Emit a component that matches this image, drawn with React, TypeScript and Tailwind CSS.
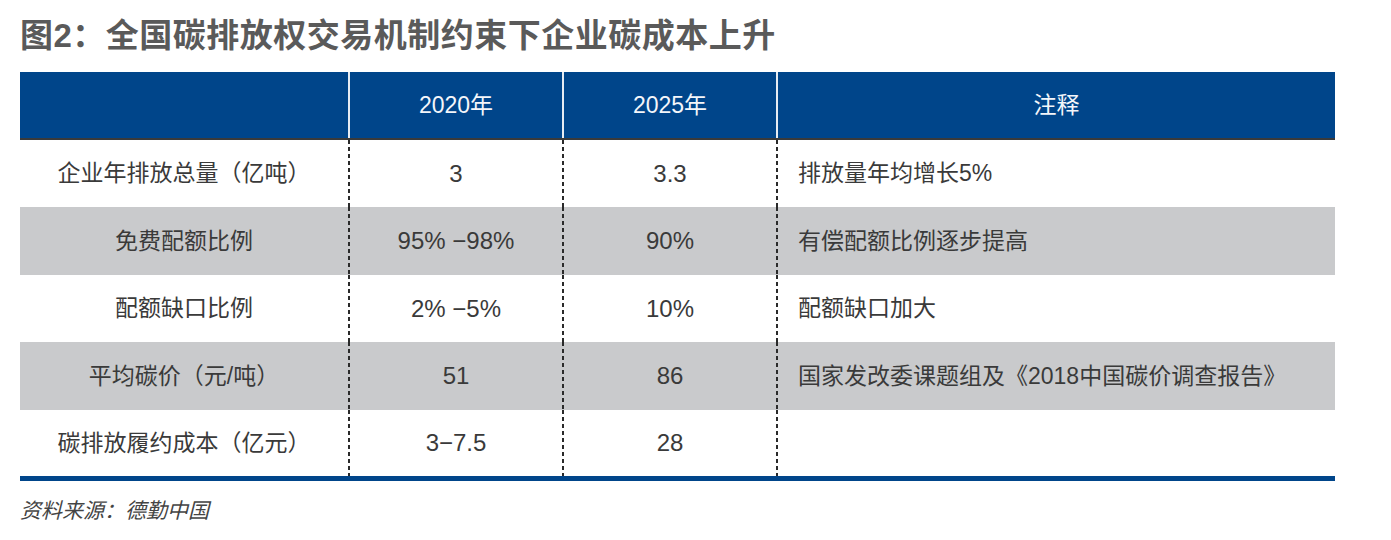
import React from "react";

const rows = [
  { a: "企业年排放总量（亿吨）", b: "3", c: "3.3", d: "排放量年均增长5%", gray: false, h: "h-[67px]" },
  { a: "免费配额比例", b: "95% −98%", c: "90%", d: "有偿配额比例逐步提高", gray: true, h: "h-[68px]" },
  { a: "配额缺口比例", b: "2% −5%", c: "10%", d: "配额缺口加大", gray: false, h: "h-[67px]" },
  { a: "平均碳价（元/吨）", b: "51", c: "86", d: "国家发改委课题组及《2018中国碳价调查报告》", gray: true, h: "h-[68px]" },
  { a: "碳排放履约成本（亿元）", b: "3−7.5", c: "28", d: "", gray: false, h: "h-[66px]" },
];

function Sep() {
  return (
    <div className="w-[2px] self-stretch bg-[repeating-linear-gradient(to_bottom,#2a2a2a_0px,#2a2a2a_4px,transparent_4px,transparent_7px)]" />
  );
}

export default function App() {
  return (
    <div
      className="w-[1391px] h-[540px] bg-white text-[#3a3a3a]"
      style={{ fontFamily: '"Liberation Sans", "Noto Sans CJK SC", sans-serif' }}
    >
      <div className="pl-[20px] pt-[19px] h-[72px]">
        <div className="text-[33px] font-bold leading-none text-[#5a5a5a] tracking-[0.5px]">
          图2：全国碳排放权交易机制约束下企业碳成本上升
        </div>
      </div>
      <div className="ml-[20px] w-[1315px]">
        <div className="flex h-[66px] bg-[#00458a] text-[#f4f6fa] text-[23px]">
          <div className="w-[328px]" />
          <div className="w-[2px] bg-[#e6ecf3]" />
          <div className="w-[212px] flex items-center justify-center">2020年</div>
          <div className="w-[2px] bg-[#e6ecf3]" />
          <div className="w-[212px] flex items-center justify-center">2025年</div>
          <div className="w-[2px] bg-[#e6ecf3]" />
          <div className="flex-1 flex items-center justify-center">注释</div>
        </div>
        <div className="h-[2px] bg-[#3a3a3a]" />
        {rows.map((r, i) => (
          <div key={i} className={`flex ${r.h} text-[23px] ${r.gray ? "bg-[#c9cacc]" : "bg-white"}`}>
            <div className="w-[328px] flex items-center justify-center">{r.a}</div>
            <Sep />
            <div className="w-[212px] flex items-center justify-center text-[24px]">{r.b}</div>
            <Sep />
            <div className="w-[212px] flex items-center justify-center text-[24px]">{r.c}</div>
            <Sep />
            <div className="flex-1 flex items-center pl-[20px]">{r.d}</div>
          </div>
        ))}
        <div className="h-[5px] bg-[#00458a]" />
      </div>
      <div className="pl-[20px] pt-[19px] text-[21px] italic leading-none text-[#444]">
        资料来源：德勤中国
      </div>
    </div>
  );
}
